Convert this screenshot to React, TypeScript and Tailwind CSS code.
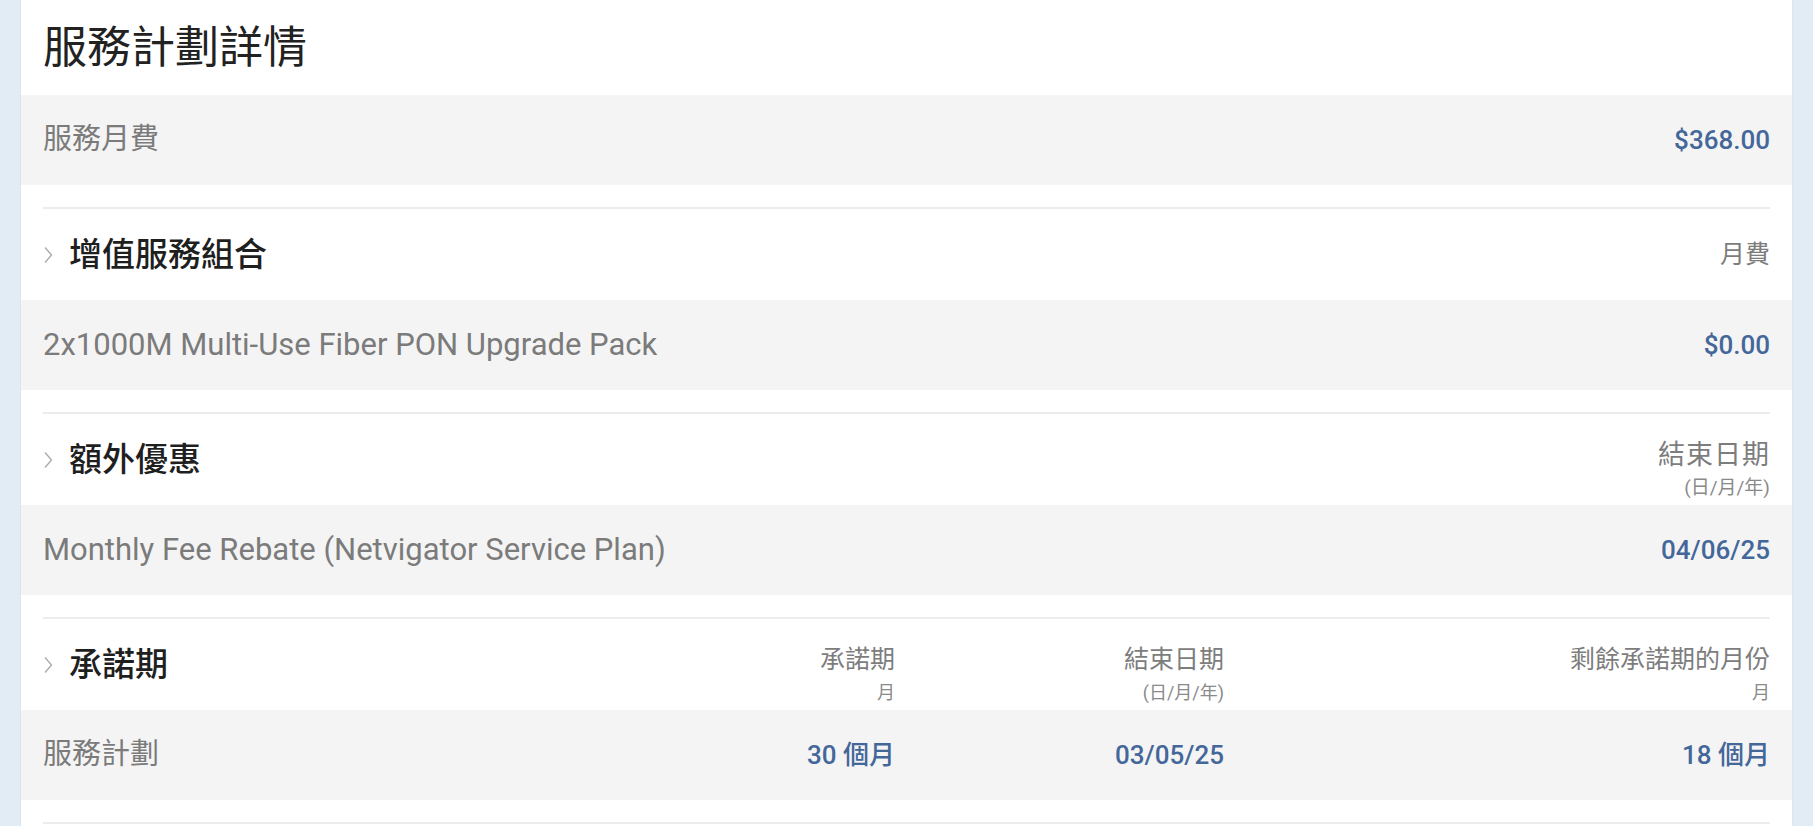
import { ReactNode } from "react";

const FONT = "font-['Roboto','Noto_Sans_CJK_TC',sans-serif]";

function Chevron() {
  return (
    <svg width="10" height="20" viewBox="0 0 10 20" className="shrink-0">
      <path d="M2 2.5 L8.5 10 L2 17.5" fill="none" stroke="#a8a8a8" strokeWidth="1.3" />
    </svg>
  );
}

function Divider() {
  return <div className="mx-[22px] h-[2px] bg-[#ececec]" />;
}

function HeadLabel({ top, sub, big }: { top: string; sub?: string; big?: boolean }) {
  return (
    <div className="flex flex-col items-end self-end pb-[2px]">
      <span
        className={
          big
            ? "text-[27px] leading-[36px] tracking-[1px] text-[#7d7d7d]"
            : "text-[25px] leading-[36px] text-[#7d7d7d]"
        }
      >
        {top}
      </span>
      {sub && (
        <span className={big ? "text-[19px] leading-[30px] text-[#8a8a8a]" : "text-[18px] leading-[30px] text-[#8a8a8a]"}>
          {sub}
        </span>
      )}
    </div>
  );
}

function SectionHead({ title, children }: { title: string; children?: ReactNode }) {
  return (
    <div className="flex h-[91px] items-center justify-between px-[22px]">
      <div className="flex items-center gap-[16px]">
        <Chevron />
        <span className="text-[33px] font-medium text-[#1f1f1f]">{title}</span>
      </div>
      {children}
    </div>
  );
}

function GrayRow({ label, value, latin }: { label: string; value: string; latin?: boolean }) {
  return (
    <div className="flex h-[90px] items-center justify-between bg-[#f4f4f4] px-[22px]">
      <span className={latin ? "text-[31px] text-[#7b7b7b]" : "text-[29px] text-[#7b7b7b]"}>{label}</span>
      <span className="text-[26px] font-medium text-[#44679a]">{value}</span>
    </div>
  );
}

export default function App() {
  return (
    <div className={`${FONT} flex min-h-[826px] w-full bg-[#e2ecf5] px-[21px]`}>
      <div className="flex-1 bg-white shadow-[0_0_2px_rgba(0,0,0,0.08)]">
        {/* plan title */}
        <div className="flex h-[95px] items-center px-[22px]">
          <h1 className="text-[44px] text-[#222]">服務計劃詳情</h1>
        </div>
        <GrayRow label="服務月費" value="$368.00" />
        <div className="h-[22px]" />

        {/* value-added services */}
        <Divider />
        <SectionHead title="增值服務組合">
          <span className="text-[25px] text-[#7d7d7d]">月費</span>
        </SectionHead>
        <GrayRow label="2x1000M Multi-Use Fiber PON Upgrade Pack" value="$0.00" latin />
        <div className="h-[22px]" />

        {/* extra offers */}
        <Divider />
        <SectionHead title="額外優惠">
          <HeadLabel top="結束日期" sub="(日/月/年)" big />
        </SectionHead>
        <GrayRow label="Monthly Fee Rebate (Netvigator Service Plan)" value="04/06/25" latin />
        <div className="h-[22px]" />

        {/* commitment period */}
        <Divider />
        <div className="grid h-[91px] grid-cols-[minmax(0,1fr)_330px_329px_546px] items-center px-[22px]">
          <div className="flex items-center gap-[16px]">
            <Chevron />
            <span className="text-[33px] font-medium text-[#1f1f1f]">承諾期</span>
          </div>
          <HeadLabel top="承諾期" sub="月" />
          <HeadLabel top="結束日期" sub="(日/月/年)" />
          <HeadLabel top="剩餘承諾期的月份" sub="月" />
        </div>
        <div className="grid h-[90px] grid-cols-[minmax(0,1fr)_330px_329px_546px] items-center bg-[#f4f4f4] px-[22px]">
          <span className="text-[29px] text-[#7b7b7b]">服務計劃</span>
          <span className="text-right text-[26px] font-medium text-[#44679a]">30 個月</span>
          <span className="text-right text-[26px] font-medium text-[#44679a]">03/05/25</span>
          <span className="text-right text-[26px] font-medium text-[#44679a]">18 個月</span>
        </div>
        <div className="h-[22px]" />
        <Divider />
      </div>
    </div>
  );
}
